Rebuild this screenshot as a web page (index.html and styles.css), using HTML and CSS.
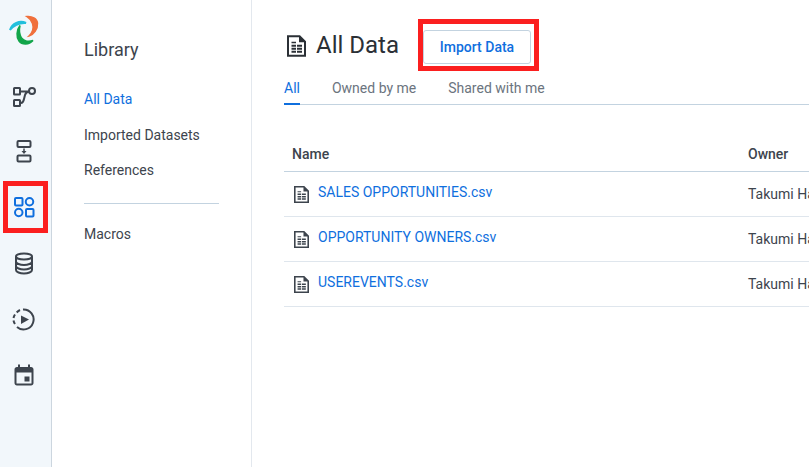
FILE: index.html
```html
<!DOCTYPE html>
<html lang="en">
<head>
<meta charset="utf-8">
<title>All Data</title>
<link rel="stylesheet" href="styles.css">
</head>
<body>
<svg class="defs" width="0" height="0" aria-hidden="true">
  <symbol id="doc" viewBox="3 2.500 19 21.500">
    <path d="M3 2.500H16L22 8.500V24H3ZM5 4.500V22H20V9.500H15V4.500Z" fill="currentColor" fill-rule="evenodd"/>
    <path d="M7.500 9H12V10.500H7.500ZM7.500 12H12V14H7.500ZM13 12H18V14H13ZM7.500 15H12V17H7.500ZM13 15H18V17H13ZM7.500 18H12V20H7.500ZM13 18H18V20H13Z" fill="currentColor"/>
  </symbol>
</svg>
<div class="app">
  <nav class="rail">
    <div class="logo">
      <svg viewBox="0 0 36 36" width="36" height="36" fill="none" stroke-linecap="round">
        <path d="M4 18C6 11.500 13.500 8 20 11C13.500 10.500 8 13 4 18Z" fill="#22bfdc" stroke="#22bfdc" stroke-width="2"/>
        <path d="M21 4.500C26 4 31 6.500 31.500 11C32 17 27.500 23 23 24C26 21 28 16 26.500 11.500C25.500 8.500 23.500 6 21 4.500Z" fill="#f0703c" stroke="#f0703c" stroke-width="1.500"/>
        <path d="M14 13.500C10.500 18 10 25 13 29C16 33 23 33 27 28.500C23 30 18 29.500 15.500 26C13.500 22.500 13 17.500 14 13.500Z" fill="#12a54a" stroke="#12a54a" stroke-width="1.500"/>
      </svg>
    </div>
    <a class="rail-item">
      <svg viewBox="0 0 24 24" width="24" height="24" fill="none" stroke="#3d444d" stroke-width="2">
        <rect x="2" y="5" width="6" height="6.500" rx=".5"/><rect x="2" y="17" width="6" height="6" rx=".5"/><circle cx="20" cy="8" r="3"/>
        <path d="M8 8.500H17M8 20H9C11 20 11.500 18.500 12 16L13 12C13.500 10 14.500 9 17 8.500"/>
      </svg>
    </a>
    <a class="rail-item">
      <svg viewBox="0 0 24 24" width="24" height="24" fill="none" stroke="#3d444d" stroke-width="2">
        <rect x="5.500" y="2" width="13" height="6" rx="1"/><rect x="5.500" y="16.500" width="13" height="6" rx="1"/>
        <path d="M12 9.500V12.500" stroke-width="1.500"/><path d="M9.500 12H14.500L12 15Z" fill="#3d444d" stroke="none"/>
      </svg>
    </a>
    <a class="rail-item rail-active">
      <svg viewBox="0 0 24 24" width="24" height="24" fill="none" stroke="#0f6fde" stroke-width="2">
        <rect x="3" y="3" width="7.500" height="7.500" rx="1"/><circle cx="17.500" cy="6.750" r="3.750"/>
        <circle cx="6.750" cy="17.500" r="3.750"/><rect x="14" y="14" width="7.500" height="7.500" rx="1"/>
      </svg>
    </a>
    <a class="rail-item">
      <svg viewBox="0 0 24 24" width="24" height="24" fill="none" stroke="#3d444d" stroke-width="2">
        <ellipse cx="12" cy="5.500" rx="8" ry="3"/>
        <path d="M4 5.500V19C4 21 8 22.500 12 22.500S20 21 20 19V5.500M4 10.500C4 12.500 8 14 12 14S20 12.500 20 10.500M4 15C4 17 8 18.500 12 18.500S20 17 20 15"/>
      </svg>
    </a>
    <a class="rail-item">
      <svg viewBox="0 0 24 24" width="24" height="24" fill="none" stroke="#3d444d" stroke-width="2">
        <path d="M11 2.500A10 10 0 1 1 5 20"/>
        <path d="M3 17A10 10 0 0 1 1.500 13.500M1.500 11A10 10 0 0 1 3 7.500M4.700 5.500A10 10 0 0 1 8 3"/>
        <path d="M9 8.500L17 12.500L9 17Z" fill="#3d444d" stroke="none"/>
      </svg>
    </a>
    <a class="rail-item">
      <svg viewBox="0 0 24 24" width="24" height="24">
        <path d="M6 1.500H8V4H16V1.500H18V4H19C20.500 4 21.500 5 21.500 6.500V20C21.500 21.500 20.500 22.500 19 22.500H5C3.500 22.500 2.500 21.500 2.500 20V6.500C2.500 5 3.500 4 5 4H6ZM4.500 9.500V20.500H19.500V9.500ZM12.500 13.500H17.500V18.500H12.500Z" fill="#3d444d" fill-rule="evenodd"/>
      </svg>
    </a>
  </nav>
  <aside class="side">
    <h2 class="side-title">Library</h2>
    <ul class="side-list">
      <li class="side-link side-current">All Data</li>
      <li class="side-link">Imported Datasets</li>
      <li class="side-link">References</li>
    </ul>
    <hr class="side-rule">
    <div class="side-link">Macros</div>
  </aside>
  <main class="main">
    <header class="head">
      <svg class="head-icon" width="19" height="22"><use href="#doc"/></svg>
      <h1 class="title">All Data</h1>
      <div class="callout"><button class="import">Import Data</button></div>
    </header>
    <div class="tabs">
      <span class="tab tab-on">All</span>
      <span class="tab">Owned by me</span>
      <span class="tab">Shared with me</span>
    </div>
    <div class="table">
      <div class="row row-head"><span class="col-name">Name</span><span class="col-owner">Owner</span></div>
      <div class="row">
        <span class="col-name file"><svg class="file-icon" width="15" height="17"><use href="#doc"/></svg><a class="file-link">SALES OPPORTUNITIES.csv</a></span>
        <span class="col-owner owner">Takumi Ha</span>
      </div>
      <div class="row">
        <span class="col-name file"><svg class="file-icon" width="15" height="17"><use href="#doc"/></svg><a class="file-link">OPPORTUNITY OWNERS.csv</a></span>
        <span class="col-owner owner">Takumi Ha</span>
      </div>
      <div class="row">
        <span class="col-name file"><svg class="file-icon" width="15" height="17"><use href="#doc"/></svg><a class="file-link">USEREVENTS.csv</a></span>
        <span class="col-owner owner">Takumi Ha</span>
      </div>
    </div>
  </main>
</div>
</body>
</html>
```
FILE: styles.css
```css
* { box-sizing: border-box; }
html, body { margin: 0; height: 100%; overflow: hidden; background: #fff; }
body { font-family: Roboto, "Liberation Sans", sans-serif; color: #3d444d; }
.defs { display: block; height: 0; }
.app { display: flex; height: 467px; width: 809px; }

.rail {
  width: 52px; flex: none; background: #f2f7fb; border-right: 1px solid #ccd6df;
  display: flex; flex-direction: column; align-items: center; padding-top: 12px; padding-right: 3px;
}
.logo { height: 36px; margin-bottom: 21px; }
.rail-item { width: 45px; height: 52px; margin-bottom: 4px; display: flex; align-items: center; justify-content: center; }
.rail-active { outline: 5px solid #fb1f1f; outline-offset: -5px; margin-left: 3px; padding-right: 3px; }

.side { width: 200px; flex: none; border-right: 1px solid #e3e8ee; padding: 39px 32px 0; }
.side-title { margin: 0 0 29px; font-size: 18px; line-height: 21px; font-weight: 400; color: #3d444d; }
.side-list { list-style: none; margin: 0; padding: 0; }
.side-link { font-size: 14px; line-height: 20px; margin-bottom: 15.500px; color: #3d444d; }
.side-current { color: #0f6fde; }
.side-rule { border: 0; border-top: 1px solid #c3d3e0; margin: 23px 0 20px; }

.main { flex: 1; min-width: 0; padding: 19px 0 0 32px; overflow: hidden; }
.head { display: flex; align-items: center; height: 52px; }
.head-icon { margin: 2px 10px 0 3px; flex: none; color: #2b3036; }
.title { margin: 0; font-size: 24px; font-weight: 400; color: #2b3036; line-height: 28px; white-space: nowrap; }
.callout { margin-left: 19px; border: 5px solid #fb1f1f; padding: 6px 3px 2px 0; height: 52px; width: 121px; display: flex; flex: none; }
.import {
  width: 108px; height: 34px; border: 1px solid #c3d3e0; border-radius: 3px; background: #fff;
  color: #0f6fde; font: 500 14px Roboto, sans-serif; padding: 0;
}

.tabs { display: flex; gap: 32px; border-bottom: 1px solid #c3d3e0; height: 34px; align-items: flex-start; padding-top: 7px; }
.tab { font-size: 14px; line-height: 20px; height: 27px; color: #6b747e; white-space: nowrap; }
.tab-on { color: #0f6fde; border-bottom: 2px solid #0f6fde; }

.table { margin-top: 31px; }
.row { display: flex; align-items: center; height: 45px; border-bottom: 1px solid #dfe6ed; font-size: 14px; white-space: nowrap; }
.row-head { height: 36px; border-bottom-color: #c3d3e0; font-weight: 500; }
.col-name { width: 464px; padding-left: 8px; flex: none; display: flex; align-items: center; }
.col-owner { flex: none; }
.owner { color: #3d444d; }
.file { padding-left: 10px; }
.file-icon { margin: 0 9px 0 0; flex: none; color: #3d444d; }
.file-link { color: #0f6fde; margin-top: -4px; }
```
